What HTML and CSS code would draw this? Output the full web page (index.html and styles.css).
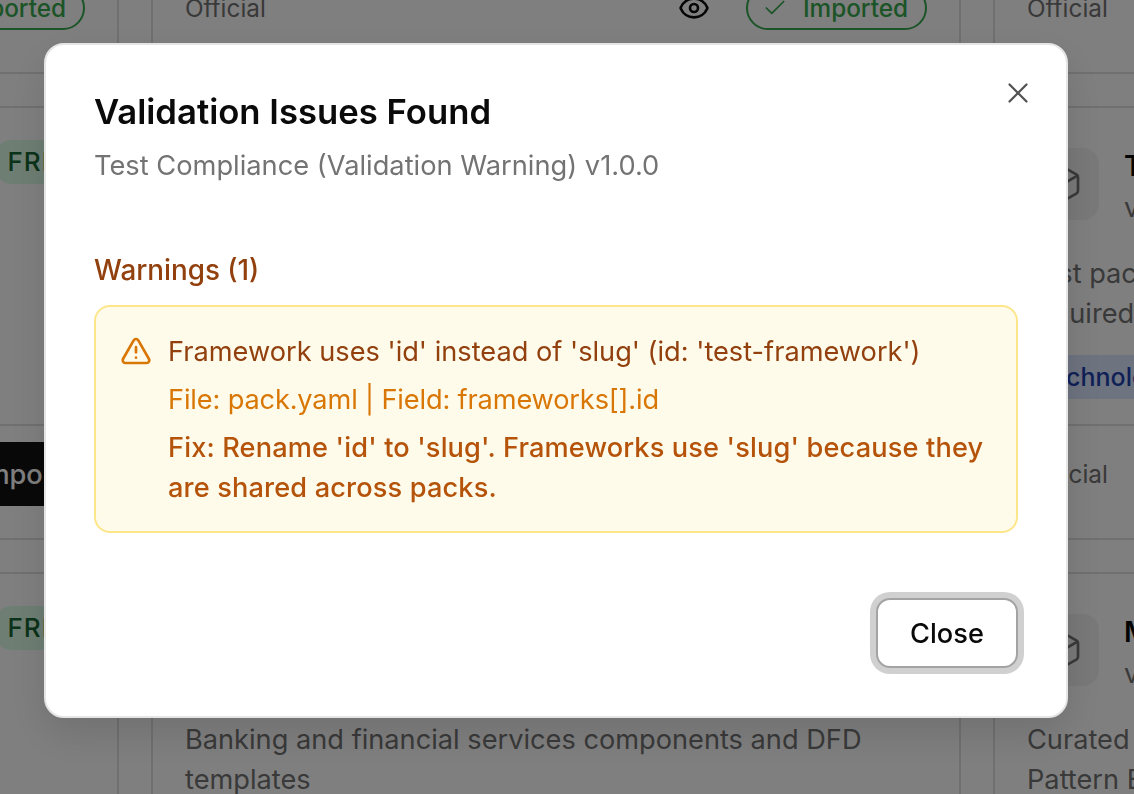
FILE: index.html
```html
<!DOCTYPE html>
<html lang="en">
<head>
  <meta charset="UTF-8" />
  <meta name="viewport" content="width=device-width, initial-scale=1.0" />
  <title>Pack Catalog</title>
  <link rel="stylesheet" href="styles.css">
</head>
<body>
  <svg class="sprite" width="0" height="0" aria-hidden="true">
    <symbol id="box" viewBox="0 0 24 24">
      <path d="M21 8a2 2 0 0 0-1-1.73l-7-4a2 2 0 0 0-2 0l-7 4A2 2 0 0 0 3 8v8a2 2 0 0 0 1 1.73l7 4a2 2 0 0 0 2 0l7-4A2 2 0 0 0 21 16Z"/>
      <path d="m3.3 7 8.7 5 8.7-5"/>
      <path d="M12 22V12"/>
    </symbol>
    <symbol id="eye" viewBox="0 0 24 24">
      <path d="M2.06 12.35a1 1 0 0 1 0-.7 10.75 10.75 0 0 1 19.88 0 1 1 0 0 1 0 .7 10.75 10.75 0 0 1-19.88 0"/>
      <circle cx="12" cy="12" r="3"/>
    </symbol>
    <symbol id="check" viewBox="0 0 24 24">
      <path d="M20 6 9 17l-5-5"/>
    </symbol>
  </svg>

  <div class="catalog">
    <article class="card">
      <div class="card-head">
        <div class="pack-icon"><svg class="icon-box"><use href="#box"/></svg></div>
        <div class="pack-name"><h3>Web Application</h3><p>v1.0.0</p></div>
        <span class="badge">FREE</span>
      </div>
      <p class="desc">Web application components and templates</p>
      <span class="tag">Technology</span>
      <div class="card-foot">
        <span class="source">Official</span>
        <span class="imported"><svg class="icon-check"><use href="#check"/></svg>Imported</span>
      </div>
    </article>
    <article class="card">
      <div class="card-head">
        <div class="pack-icon"><svg class="icon-box"><use href="#box"/></svg></div>
        <div class="pack-name"><h3>Cloud Services</h3><p>v1.0.0</p></div>
        <span class="badge">FREE</span>
      </div>
      <p class="desc">Cloud platform components and DFD templates for common deployments</p>
      <span class="tag">Technology</span>
      <div class="card-foot">
        <span class="source">Official</span>
        <svg class="icon-eye"><use href="#eye"/></svg>
        <span class="imported"><svg class="icon-check"><use href="#check"/></svg>Imported</span>
      </div>
    </article>
    <article class="card">
      <div class="card-head">
        <div class="pack-icon"><svg class="icon-box"><use href="#box"/></svg></div>
        <div class="pack-name"><h3>Mobile Apps</h3><p>v1.0.0</p></div>
        <span class="badge">FREE</span>
      </div>
      <p class="desc">Mobile application components and threat patterns for review</p>
      <span class="tag">Technology</span>
      <div class="card-foot">
        <span class="source">Official</span>
        <span class="imported"><svg class="icon-check"><use href="#check"/></svg>Imported</span>
      </div>
    </article>

    <article class="card">
      <div class="card-head">
        <div class="pack-icon"><svg class="icon-box"><use href="#box"/></svg></div>
        <div class="pack-name"><h3>Healthcare</h3><p>v1.0.0</p></div>
        <span class="badge">FREE</span>
      </div>
      <p class="desc">Healthcare components and templates</p>
      <span class="tag">Industry</span>
      <div class="card-foot">
        <span class="source">Official</span>
        <button class="import-btn">Import</button>
      </div>
    </article>
    <article class="card">
      <div class="card-head">
        <div class="pack-icon"><svg class="icon-box"><use href="#box"/></svg></div>
        <div class="pack-name"><h3>Test Compliance</h3><p>v1.0.0</p></div>
        <span class="badge">FREE</span>
      </div>
      <p class="desc">Test pack for compliance checks with validation warnings</p>
      <span class="tag">Compliance</span>
      <div class="card-foot">
        <span class="source">Official</span>
        <button class="import-btn">Import</button>
      </div>
    </article>
    <article class="card">
      <div class="card-head">
        <div class="pack-icon"><svg class="icon-box"><use href="#box"/></svg></div>
        <div class="pack-name"><h3>Test Framework</h3><p>v1.0.0</p></div>
        <span class="badge">FREE</span>
      </div>
      <p class="desc">Test pack for a framework import where a slug is<br>required</p>
      <span class="tag">Technology</span>
      <div class="card-foot">
        <span class="source">Official</span>
        <button class="import-btn">Import</button>
      </div>
    </article>

    <article class="card">
      <div class="card-head">
        <div class="pack-icon"><svg class="icon-box"><use href="#box"/></svg></div>
        <div class="pack-name"><h3>Retail</h3><p>v1.0.0</p></div>
        <span class="badge">FREE</span>
      </div>
      <p class="desc">Retail components and DFD templates</p>
    </article>
    <article class="card">
      <div class="card-head">
        <div class="pack-icon"><svg class="icon-box"><use href="#box"/></svg></div>
        <div class="pack-name"><h3>Finance</h3><p>v1.0.0</p></div>
        <span class="badge">FREE</span>
      </div>
      <p class="desc">Banking and financial services components and DFD templates</p>
    </article>
    <article class="card">
      <div class="card-head">
        <div class="pack-icon"><svg class="icon-box"><use href="#box"/></svg></div>
        <div class="pack-name"><h3>MITRE Patterns</h3><p>v1.0.0</p></div>
        <span class="badge">FREE</span>
      </div>
      <p class="desc">Curated threat library from the Common Attack<br>Pattern Enumeration</p>
    </article>
  </div>

  <div class="overlay">
    <div class="modal">
      <button class="modal-x" aria-label="Close">
        <svg viewBox="0 0 24 24"><path d="M18 6 6 18"/><path d="m6 6 12 12"/></svg>
      </button>
      <h2>Validation Issues Found</h2>
      <p class="modal-sub">Test Compliance (Validation Warning) v1.0.0</p>
      <h4>Warnings (1)</h4>
      <div class="warning">
        <svg class="warning-icon" viewBox="0 0 24 24">
          <path d="m21.73 18-8-14a2 2 0 0 0-3.48 0l-8 14A2 2 0 0 0 4 21h16a2 2 0 0 0 1.73-3"/>
          <path d="M12 9v4"/>
          <path d="M12 17h.01"/>
        </svg>
        <div class="warning-text">
          <p class="warning-msg">Framework uses 'id' instead of 'slug' (id: 'test-framework')</p>
          <p class="warning-loc">File: pack.yaml | Field: frameworks[].id</p>
          <p class="warning-fix">Fix: Rename 'id' to 'slug'. Frameworks use 'slug' because they are shared across packs.</p>
        </div>
      </div>
      <div class="modal-actions">
        <button class="close-btn">Close</button>
      </div>
    </div>
  </div>
</body>
</html>
```

FILE: styles.css
```css
* {
  box-sizing: border-box;
}
html, body {
  height: 100%;
  overflow: hidden;
}
body {
  margin: 0;
  font-family: Inter, "Liberation Sans", sans-serif;
  background-color: #fff;
  color: #0a0a0a;
}
.sprite {
  display: block;
}
svg {
  fill: none;
  stroke: currentColor;
  stroke-linecap: round;
  stroke-linejoin: round;
  stroke-width: 2;
}

/* catalog behind the dialog */
.catalog {
  display: grid;
  grid-template-columns: repeat(3, 810px);
  gap: 32px;
  width: 2494px;
  margin-left: -691px;
  margin-top: -360px;
}
.card {
  height: 434px;
  border: 2px solid #e0e0e0;
  border-radius: 20px;
  padding: 40px 32px 0;
  display: flex;
  flex-direction: column;
  align-items: flex-start;
}
.card-head {
  display: flex;
  align-items: flex-start;
  width: 100%;
  gap: 25px;
  height: 72px;
}
.pack-icon {
  width: 72px;
  height: 72px;
  border-radius: 16px;
  background-color: #f3f3f3;
  display: flex;
  align-items: center;
  justify-content: center;
  color: #737373;
}
.icon-box {
  width: 40px;
  height: 40px;
  stroke-width: 1.6;
}
.pack-name {
  flex: 1;
}
.pack-name h3 {
  margin: -2px 0 4px;
  font-size: 28px;
  line-height: 40px;
  font-weight: 600;
}
.pack-name p {
  margin: 0;
  font-size: 27.2px;
  line-height: 36px;
  color: #737373;
}
.badge {
  height: 44px;
  padding: 0 10px;
  border-radius: 14px;
  background-color: #dcfce7;
  color: #166534;
  font-size: 26px;
  letter-spacing: 1px;
  line-height: 44px;
  font-weight: 500;
  margin-top: -8px;
}
.desc {
  margin: 34px 0 0;
  height: 80px;
  font-size: 27.2px;
  line-height: 40px;
  color: #737373;
}
.tag {
  margin-top: 21px;
  height: 44px;
  padding: 0 10px;
  border-radius: 8px;
  background-color: #dbe7ff;
  color: #1e40af;
  font-size: 25px;
  line-height: 44px;
  font-weight: 500;
}
.card-foot {
  margin-top: 25px;
  margin-left: -32px;
  margin-right: -32px;
  width: calc(100% + 64px);
  border-top: 2px solid #e0e0e0;
  padding: 16px 32px 0;
  display: flex;
  align-items: center;
  min-height: 81px;
  font-size: 24.3px;
}
.source {
  flex: 1;
  color: #737373;
}
.icon-eye {
  width: 32px;
  height: 32px;
  color: #0a0a0a;
  margin-right: 36px;
}
.imported {
  display: flex;
  align-items: center;
  gap: 15px;
  height: 44px;
  padding: 0 17px 0 14px;
  border: 2px solid #36a84c;
  border-radius: 22px;
  color: #36a84c;
  font-weight: 500;
}
.icon-check {
  width: 26px;
  height: 26px;
  stroke-width: 1.6;
}
.import-btn {
  height: 64px;
  padding: 0 22px;
  border: 0;
  border-radius: 4px;
  background-color: #111;
  color: #fff;
  font-family: inherit;
  font-size: 27.2px;
  font-weight: 500;
}

/* dialog */
.overlay {
  position: fixed;
  inset: 0;
  background-color: rgba(0, 0, 0, 0.5);
  padding: 43px 0 0 44px;
}
.modal {
  position: relative;
  width: 1024px;
  height: 675px;
  padding: 46px 48px 0;
  background-color: #fff;
  border: 2px solid #e5e5e5;
  border-radius: 20px;
  box-shadow: 0 16px 40px rgba(0, 0, 0, 0.12);
}
.modal-x {
  position: absolute;
  top: 31px;
  right: 31px;
  width: 34px;
  height: 34px;
  padding: 0;
  border: 0;
  background: none;
  color: #525252;
}
.modal-x svg {
  width: 34px;
  height: 34px;
  stroke-width: 1.6;
}
.modal h2 {
  margin: 0;
  font-size: 34.7px;
  line-height: 40px;
  font-weight: 600;
}
.modal-sub {
  margin: 15px 0 0;
  font-size: 27.25px;
  line-height: 40px;
  color: #737373;
}
.modal h4 {
  margin: 64px 0 0;
  font-size: 27.8px;
  line-height: 40px;
  font-weight: 500;
  color: #92400e;
}
.warning {
  display: flex;
  gap: 16px;
  margin-top: 15px;
  padding: 25px 26px 23px 24px;
  background-color: #fffbeb;
  border: 2px solid #fde68a;
  border-radius: 16px;
}
.warning-icon {
  flex: none;
  width: 32px;
  height: 32px;
  margin-top: 3px;
  color: #d97706;
}
.warning-text p {
  margin: 0;
  font-size: 27.2px;
  line-height: 40px;
}
.warning-msg {
  color: #92400e;
}
.warning .warning-loc {
  margin-top: 8px;
  color: #d97706;
  letter-spacing: -0.15px;
}
.warning .warning-fix {
  margin-top: 8px;
  color: #b45309;
  font-weight: 500;
  letter-spacing: 0.14px;
}
.modal-actions {
  display: flex;
  justify-content: flex-end;
  margin-top: 65px;
}
.close-btn {
  width: 142px;
  height: 70px;
  border: 2px solid #a3a3a3;
  border-radius: 14px;
  background-color: #fff;
  color: #0a0a0a;
  font-family: inherit;
  font-size: 27.2px;
  font-weight: 500;
  box-shadow: 0 0 0 6px #d0d0d0;
}
```
